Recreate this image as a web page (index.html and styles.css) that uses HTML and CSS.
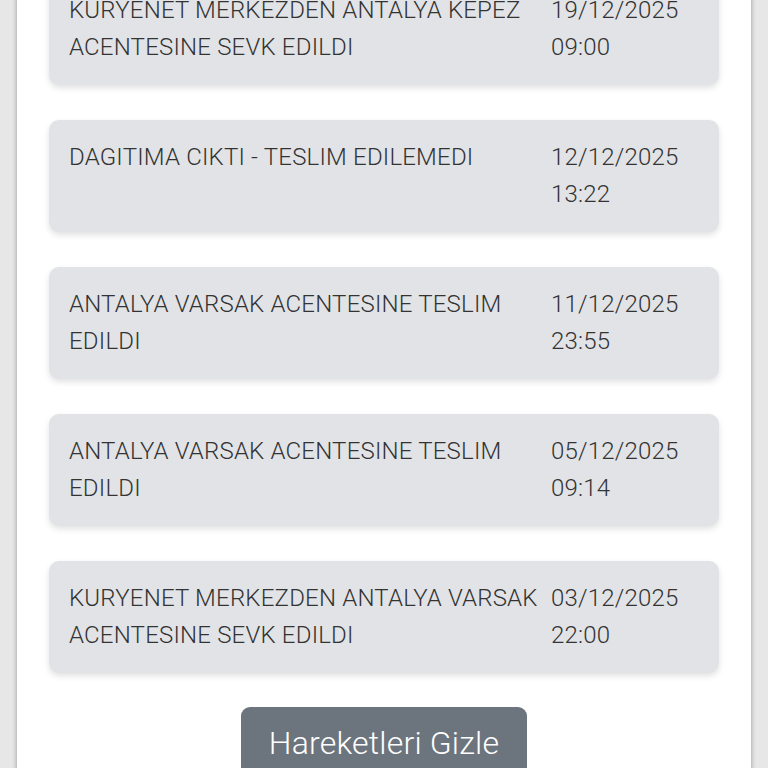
FILE: index.html
```html
<!DOCTYPE html>
<html lang="tr">

<head>
    <meta charset="UTF-8">
    <meta name="viewport" content="width=device-width, initial-scale=1.0">
    <title>Kargo Takip</title>
    <link rel="stylesheet" href="styles.css">
</head>

<body>
    <div class="panel">
        <div class="moves">
            <div class="move">
                <div class="move-desc">KURYENET MERKEZDEN ANTALYA KEPEZ ACENTESINE SEVK EDILDI</div>
                <div class="move-date">19/12/2025<br>09:00</div>
            </div>
            <div class="move">
                <div class="move-desc">DAGITIMA CIKTI - TESLIM EDILEMEDI</div>
                <div class="move-date">12/12/2025<br>13:22</div>
            </div>
            <div class="move">
                <div class="move-desc">ANTALYA VARSAK ACENTESINE TESLIM EDILDI</div>
                <div class="move-date">11/12/2025<br>23:55</div>
            </div>
            <div class="move">
                <div class="move-desc">ANTALYA VARSAK ACENTESINE TESLIM EDILDI</div>
                <div class="move-date">05/12/2025<br>09:14</div>
            </div>
            <div class="move">
                <div class="move-desc">KURYENET MERKEZDEN ANTALYA VARSAK ACENTESINE SEVK EDILDI</div>
                <div class="move-date">03/12/2025<br>22:00</div>
            </div>
        </div>
        <div class="actions">
            <button type="button" class="btn-hide">Hareketleri Gizle</button>
        </div>
    </div>
</body>

</html>
```

FILE: styles.css
```css
* {
    padding: 0;
    margin: 0;
    box-sizing: border-box;
}

body {
    background: #e7e7e7;
    font-family: Roboto, "Liberation Sans", sans-serif;
    height: 768px;
    overflow: hidden;
}

.panel {
    margin: 0 17px;
    background: #fff;
    box-shadow: 0 0 5px rgba(0, 0, 0, 0.35);
    min-height: 800px;
    padding: 0 32px;
}

.moves {
    display: flex;
    flex-direction: column;
    gap: 35px;
    margin-top: -27px;
}

.move {
    display: flex;
    gap: 10px;
    background: #e2e3e6;
    border-radius: 10px;
    padding: 19px 20px 19px 20px;
    min-height: 112px;
    box-shadow: 0 3px 6px rgba(0, 0, 0, 0.12);
    color: #333;
    font-size: 24px;
    font-weight: 350;
    letter-spacing: 0.2px;
    line-height: 37px;
}

.move-desc {
    flex: 1;
}

.move-date {
    width: 148px;
}

.actions {
    display: flex;
    justify-content: center;
    margin-top: 34px;
}

.btn-hide {
    background: #6c757d;
    color: #fff;
    border: none;
    border-radius: 9px;
    font-family: Roboto, "Liberation Sans", sans-serif;
    font-size: 32px;
    font-weight: 350;
    letter-spacing: 0.2px;
    padding: 17px 28px;
}
```
